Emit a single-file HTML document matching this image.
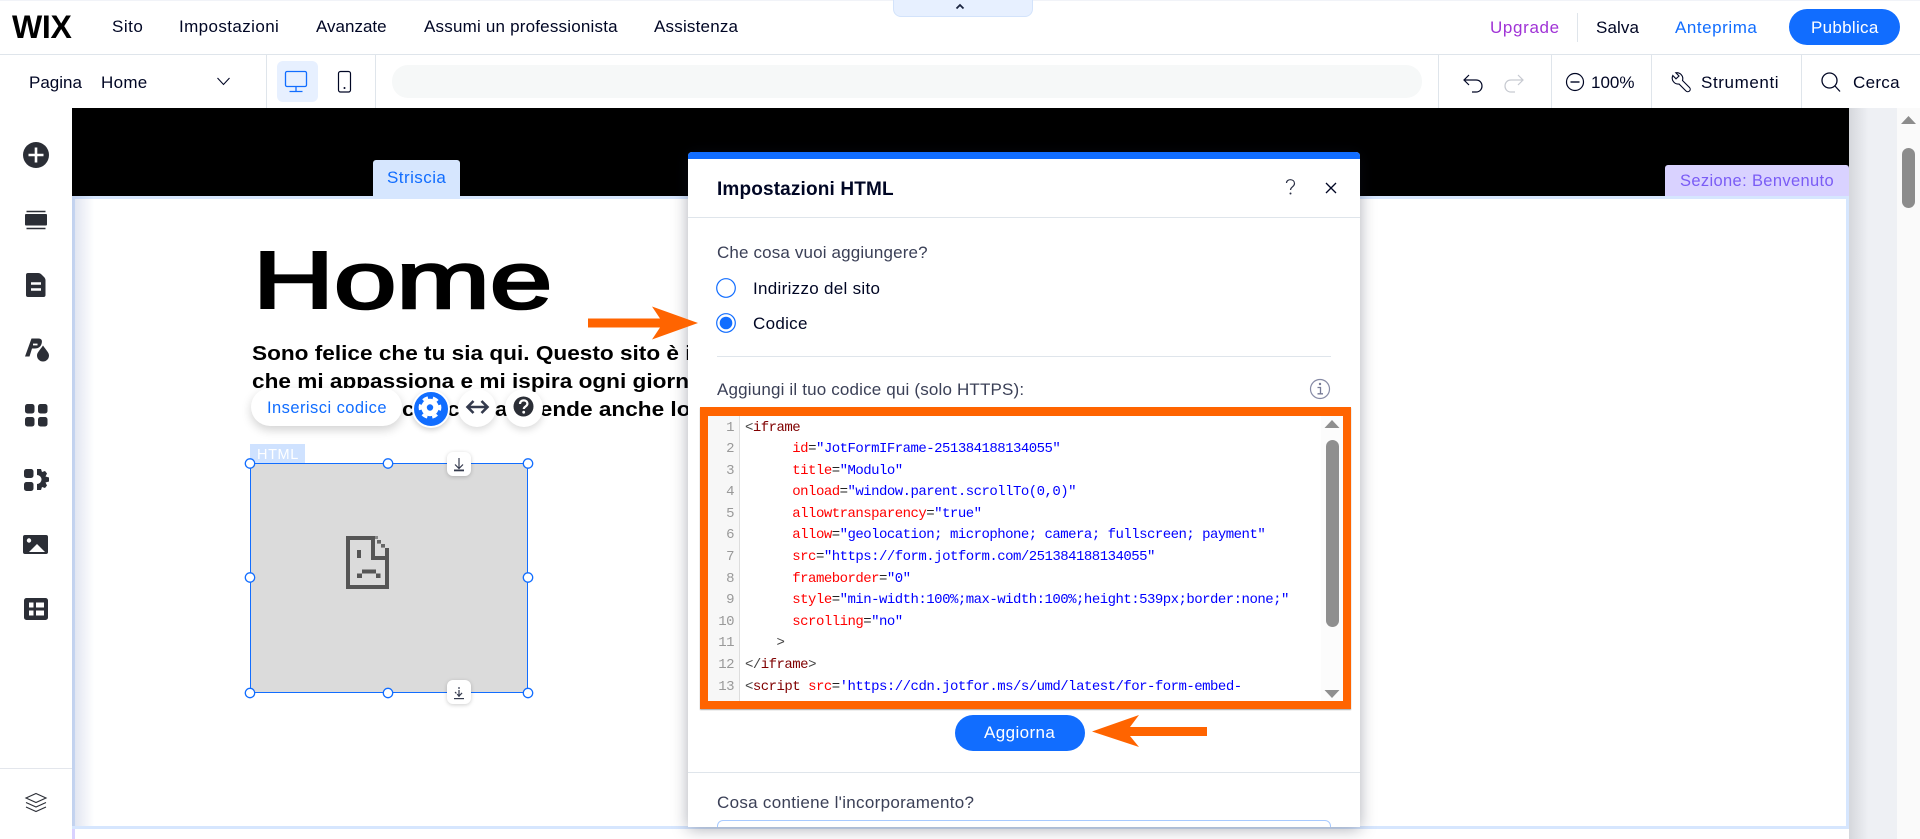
<!DOCTYPE html>
<html lang="it"><head><meta charset="utf-8"><title>Impostazioni HTML</title>
<style>
html,body{margin:0;padding:0;background:#fff}
body{width:1920px;height:839px;overflow:hidden;position:relative;font-family:"Liberation Sans",sans-serif;color:#000624}
.a{position:absolute}
.t{position:absolute;white-space:nowrap;line-height:24px;font-size:17px;letter-spacing:.3px}
.sep{position:absolute;width:1px;background:#dfe5eb}
pre{margin:0;font-family:"Liberation Mono",monospace;font-size:14px;letter-spacing:-.52px;line-height:21.6px}
.tg{color:#800000}.at{color:#f00}.v{color:#00f}.br{color:#444}.eq{color:#222}
.p{position:absolute;white-space:nowrap;font-weight:bold;font-size:20px;line-height:28px;transform:scaleX(1.13);transform-origin:0 0;color:#000}
</style></head><body>

<!-- canvas -->
<div class="a" style="left:72px;top:108px;width:1777px;height:88px;background:#000"></div>
<div class="a" style="left:72px;top:196px;width:1771px;height:627px;border:3px solid #d6e6fe;background:#fff"></div>
<div class="a" style="left:72px;top:826px;width:3px;height:13px;background:#d9d2ff"></div>
<div class="a" style="left:72px;top:826px;width:1777px;height:3px;background:#d6e6fe"></div>
<div class="a" style="left:72px;top:196px;width:22px;height:630px;background:linear-gradient(90deg,rgba(150,165,205,.32),rgba(255,255,255,0) 100%)"></div>
<div class="a" style="left:1849px;top:108px;width:48px;height:731px;background:linear-gradient(90deg,#d5d7dc,#eef0f4 40%)"></div>
<div class="a" style="left:1897px;top:108px;width:23px;height:731px;background:#fafafa"></div>
<div class="a" style="left:1902px;top:148px;width:13px;height:60px;border-radius:7px;background:#8c8c8c"></div>
<svg class="a" style="left:1897px;top:108px" width="23" height="20"><path d="M11.5 8l7.5 8H4z" fill="#8c8c8c"/></svg>

<!-- tags -->
<div class="a" style="left:373px;top:160px;width:87px;height:36px;background:#d6e6fe;border-radius:3px 3px 0 0"></div>
<div class="t" style="left:387px;top:166px;color:#116dff;letter-spacing:.45px">Striscia</div>
<div class="a" style="left:1665px;top:165px;width:184px;height:31px;background:#d9d2ff;border-radius:3px 3px 0 0"></div>
<div class="t" style="left:1680px;top:169px;color:#7a5cf5;font-size:16.5px;letter-spacing:.35px">Sezione: Benvenuto</div>

<!-- page content -->
<div class="a" style="left:253px;top:229px;font-size:81px;line-height:104px;font-weight:normal;-webkit-text-stroke:2.6px #000;transform:scaleX(1.385);transform-origin:0 0;color:#000;white-space:nowrap">Home</div>
<div class="p" style="left:252px;top:340px">Sono felice che tu sia qui. Questo sito è il luogo</div>
<div class="p" style="left:252px;top:368px">che mi appassiona e mi ispira ogni giorno e che</div>
<div class="p" style="left:402px;top:396px">c</div>
<div class="p" style="left:447px;top:396px">c</div>
<div class="p" style="left:495px;top:396px">a</div>
<div class="p" style="left:531px;top:396px">rende anche lo</div>

<!-- floating toolbar -->
<div class="a" style="left:251px;top:388px;width:151px;height:38px;border-radius:19px;background:#fff;box-shadow:0 4px 10px rgba(0,0,0,.18)"></div>
<div class="t" style="left:267px;top:396px;color:#116dff;font-size:16.5px;letter-spacing:.45px">Inserisci codice</div>
<div class="a" style="left:458px;top:389px;width:38px;height:38px;border-radius:50%;background:#fff;box-shadow:0 3px 8px rgba(0,0,0,.15)"></div>
<div class="a" style="left:505px;top:389px;width:38px;height:38px;border-radius:50%;background:#fff;box-shadow:0 3px 8px rgba(0,0,0,.15)"></div>
<div class="a" style="left:412px;top:390px;width:34px;height:34px;border-radius:50%;background:#116dff;border:2px solid #fff;box-shadow:0 2px 6px rgba(0,0,0,.2)"></div>

<!-- HTML tag + selected box -->
<div class="a" style="left:250px;top:444px;width:55px;height:20px;background:#cfe2ff"></div>
<div class="t" style="left:257px;top:443px;color:#fff;font-size:14.5px;letter-spacing:.6px">HTML</div>
<div class="a" style="left:250px;top:463px;width:276px;height:228px;border:1.5px solid #116dff;background:#dbdbdb"></div>
<div class="a" style="left:447px;top:452px;width:24px;height:24px;border-radius:6px;background:#fff;box-shadow:0 1px 4px rgba(0,0,0,.2)"></div>
<div class="a" style="left:447px;top:680px;width:24px;height:24px;border-radius:6px;background:#fff;box-shadow:0 1px 4px rgba(0,0,0,.2)"></div>

<!-- global icon layer (below modal) -->
<svg class="a" style="left:0;top:0" width="1920" height="839" fill="none">
  <!-- handles -->
  <g fill="#fff" stroke="#116dff" stroke-width="1.3">
    <circle cx="250" cy="463.5" r="4.7"/><circle cx="388" cy="463.5" r="4.7"/><circle cx="528" cy="463.5" r="4.7"/>
    <circle cx="250" cy="577.5" r="4.7"/><circle cx="528" cy="577.5" r="4.7"/>
    <circle cx="250" cy="693" r="4.7"/><circle cx="388" cy="693" r="4.7"/><circle cx="528" cy="693" r="4.7"/>
  </g>
  <!-- anchors -->
  <path d="M459 458v10M455 464.5l4 4 4-4" stroke="#343a4d" stroke-width="1.2"/><rect x="454" y="469.5" width="10" height="1.8" fill="#343a4d"/>
  <path d="M459 687v10M455 692l4 4 4-4" stroke="#343a4d" stroke-width="1.2" stroke-dasharray="2 1 7"/><rect x="454" y="698" width="10" height="1.2" fill="#343a4d"/>
  <!-- sad page -->
  <g fill="#555">
    <rect x="346" y="536" width="4" height="53"/><rect x="346" y="536" width="29" height="4"/>
    <rect x="346" y="585" width="43" height="4"/><rect x="385" y="556" width="4" height="33"/>
    <rect x="371" y="536" width="4" height="24"/><rect x="371" y="556" width="18" height="4"/>
    <rect x="375" y="536" width="3" height="3" fill="#888"/><rect x="377" y="540" width="4" height="3.600" fill="#666"/><rect x="381" y="544" width="4" height="3.600" fill="#666"/><rect x="385" y="548" width="4" height="8"/>
    <rect x="357" y="550" width="4" height="8"/>
    <rect x="362" y="569.500" width="14" height="4"/><rect x="357" y="573.500" width="5" height="4.500"/><rect x="376" y="573.500" width="4.500" height="4.500"/>
  </g>
  <!-- gear -->
  <g transform="translate(430,407.5)">
    <circle r="10" stroke="#fff" stroke-width="2.800" stroke-dasharray="5.500 4.970" transform="rotate(-15)"/>
    <circle r="8.700" fill="#fff"/><circle r="3.200" fill="#116dff"/>
  </g>
  <!-- horizontal resize -->
  <path d="M468 407h19M473.5 401l-6 6 6 6M481.5 401l6 6-6 6" stroke="#343a4d" stroke-width="2.6"/>
  <!-- help -->
  <circle cx="523.5" cy="406.5" r="10" fill="#2b2e36"/>
  <path d="M520 404c0-5 7.4-4.6 7.4-.3 0 2.8-3.6 2.7-3.6 5.3" stroke="#fff" stroke-width="2.2"/><circle cx="523.7" cy="412.2" r="1.4" fill="#fff"/>
</svg>

<!-- top bars -->
<div class="a" style="left:0;top:0;width:1920px;height:108px;background:#fff"></div>
<div class="a" style="left:0;top:0;width:1920px;height:1px;background:#f1f3f8"></div>
<div class="a" style="left:0;top:54px;width:1920px;height:1px;background:#dfe5eb"></div>
<div class="a" style="left:893px;top:-1px;width:138px;height:16px;background:#e7f0ff;border:1px solid #d3e3fb;border-radius:0 0 8px 8px"></div>
<svg class="a" style="left:950px;top:1px" width="20" height="10" fill="none"><path d="M6.500 7.500L10 4l3.500 3.500" stroke="#1b2540" stroke-width="1.800"/></svg>

<div class="a" style="left:12px;top:9px;font-size:32px;line-height:37px;font-weight:bold;color:#000;letter-spacing:-.3px">WIX</div>
<div class="t" style="left:112px;top:15px;letter-spacing:.5px">Sito</div>
<div class="t" style="left:179px;top:15px;letter-spacing:.4px">Impostazioni</div>
<div class="t" style="left:316px;top:15px;letter-spacing:0">Avanzate</div>
<div class="t" style="left:424px;top:15px;letter-spacing:.2px">Assumi un professionista</div>
<div class="t" style="left:654px;top:15px;letter-spacing:.2px">Assistenza</div>
<div class="t" style="left:1490px;top:16px;color:#a033d6;letter-spacing:.65px">Upgrade</div>
<div class="sep" style="left:1577px;top:13px;height:29px"></div>
<div class="t" style="left:1596px;top:16px;letter-spacing:.1px">Salva</div>
<div class="t" style="left:1675px;top:16px;color:#116dff;letter-spacing:.55px">Anteprima</div>
<div class="a" style="left:1789px;top:9px;width:111px;height:36px;border-radius:18px;background:#116dff"></div>
<div class="t" style="left:1811px;top:16px;color:#fff">Pubblica</div>

<div class="t" style="left:29px;top:71px;letter-spacing:0">Pagina</div>
<div class="t" style="left:101px;top:71px">Home</div>
<div class="sep" style="left:266px;top:55px;height:53px"></div>
<div class="a" style="left:277px;top:61px;width:41px;height:41px;border-radius:6px;background:#e7f0ff"></div>
<div class="sep" style="left:375px;top:55px;height:53px"></div>
<div class="a" style="left:392px;top:65px;width:1030px;height:33px;border-radius:16px;background:#f6f8f8"></div>
<div class="sep" style="left:1438px;top:55px;height:53px"></div>
<div class="sep" style="left:1551px;top:55px;height:53px"></div>
<div class="sep" style="left:1651px;top:55px;height:53px"></div>
<div class="sep" style="left:1801px;top:55px;height:53px"></div>
<div class="t" style="left:1591px;top:71px;font-size:17px;letter-spacing:0">100%</div>
<div class="t" style="left:1701px;top:71px;letter-spacing:.6px">Strumenti</div>
<div class="t" style="left:1853px;top:71px">Cerca</div>

<svg class="a" style="left:0;top:0" width="1920" height="110" fill="none">
  <path d="M217.500 78l6 6.500 6-6.500" stroke="#000624" stroke-width="1.100"/>
  <rect x="285.500" y="71.500" width="21" height="15" rx="1.500" stroke="#116dff" stroke-width="1.300"/>
  <path d="M296 87v4M289.500 91.500h13" stroke="#116dff" stroke-width="1.300"/>
  <rect x="338.500" y="71.500" width="12" height="20.500" rx="2" stroke="#000624" stroke-width="1.200"/>
  <circle cx="344.500" cy="88" r="1" fill="#000624"/>
  <path d="M1469 75l-5 5 5 5M1465 80h11c8 0 8 12 0 12h-4" stroke="#000624" stroke-width="1.200"/>
  <path d="M1518 75l5 5-5 5M1522 80h-11c-8 0-8 12 0 12h4" stroke="#c6c9d0" stroke-width="1.200"/>
  <circle cx="1575" cy="82" r="8.500" stroke="#000624" stroke-width="1.200"/>
  <path d="M1570.500 82h9" stroke="#000624" stroke-width="1.400"/>
  <path d="M1672.800 75.500L1676 78.800 1679 76 1675.800 72.800A6 6 0 0 1 1682.500 80.500L1689.500 87.500A2.300 2.300 0 0 1 1686 91L1679 84A6 6 0 0 1 1672.800 75.500Z" stroke="#000624" stroke-width="1.100"/>
  <circle cx="1829.500" cy="80.500" r="7.500" stroke="#000624" stroke-width="1.300"/>
  <path d="M1835 86l5 5.500" stroke="#000624" stroke-width="1.300"/>
</svg>

<!-- left sidebar -->
<div class="a" style="left:0;top:108px;width:72px;height:731px;background:#fff"></div>
<div class="a" style="left:0;top:768px;width:72px;height:1px;background:#e3e6ec"></div>
<svg class="a" style="left:0;top:108px" width="72" height="731" fill="none">
  <g transform="translate(0,-108)">
    <circle cx="36" cy="155" r="13" fill="#2b2e36"/>
    <path d="M36 147.500v15M28.500 155h15" stroke="#fff" stroke-width="2.600"/>
    <path d="M26.500 211.500h19M26.500 228.500h19" stroke="#2b2e36" stroke-width="1.600"/>
    <rect x="25" y="214" width="22" height="11.500" rx="1" fill="#2b2e36"/>
    <path d="M28 273h10c1.500 0 2.500 .5 3.500 1.500l2.500 2.500c1 1 1.500 2 1.500 3.500V295a2 2 0 0 1-2 2H28a2 2 0 0 1-2-2V275a2 2 0 0 1 2-2z" fill="#2b2e36"/>
    <path d="M31 283.500h10M31 289.500h10" stroke="#fff" stroke-width="2.400"/>
    <path d="M25 356.500l6.500-18h7c3.500 0 4 2.500 3 5.500-1 3-3.500 4.500-6.500 4.500H32L29.500 356.500z" fill="#2b2e36"/>
    <path d="M33 344.500h4.500" stroke="#fff" stroke-width="1.800"/>
    <path d="M43 345.500c3 4.500 6 7 6 10a6 6 0 0 1-12 0c0-3 3-5.500 6-10z" fill="#2b2e36"/>
    <g fill="#2b2e36">
      <rect x="25" y="404" width="9.500" height="9.500" rx="2.500"/><rect x="38" y="404" width="9.500" height="9.500" rx="2.500"/>
      <rect x="25" y="417" width="9.500" height="9.500" rx="2.500"/><rect x="38" y="417" width="9.500" height="9.500" rx="2.500"/>
      <rect x="24" y="469" width="9.500" height="9" rx="2.500"/><rect x="24" y="482" width="9.500" height="9" rx="2.500"/>
      <path d="M37 469h4l1 3 3-1 2 2.500-1.500 3 3.500 1v4l-3.500 1 1.500 3-2 2.500-3-1-1 3h-4v-6a4.500 4.500 0 0 0 0-9z"/>
      <path d="M25 535h21a2 2 0 0 1 2 2v15a2 2 0 0 1-2 2H25a2 2 0 0 1-2-2v-15a2 2 0 0 1 2-2z"/>
      <rect x="24" y="598" width="24" height="22" rx="2.500"/>
    </g>
    <circle cx="29" cy="540.500" r="2.200" fill="#fff"/>
    <path d="M29 552l8-8 8 8z" fill="#fff"/>
    <g fill="#fff">
      <rect x="29" y="602.500" width="4.500" height="5"/><rect x="36" y="602.500" width="8" height="5"/>
      <rect x="29" y="610.500" width="4.500" height="5"/><rect x="36" y="610.500" width="8" height="5"/>
    </g>
    <g stroke="#2b2e36" stroke-width="1.100">
      <path d="M36 793.500l10 4.500-10 4.500-10-4.500z"/>
      <path d="M26 802.500l10 4.500 10-4.500M26 807l10 4.500 10-4.500"/>
    </g>
  </g>
</svg>

<!-- modal -->
<div class="a" style="left:688px;top:152px;width:672px;height:675px;background:#fff;border-radius:4px 4px 0 0;box-shadow:0 2px 16px rgba(20,25,50,.35);overflow:hidden">
  <div class="a" style="left:0;top:0;width:672px;height:7px;background:#116dff"></div>
  <div class="t" style="left:29px;top:26px;font-size:19px;font-weight:bold;letter-spacing:.15px">Impostazioni HTML</div>
  <div class="a" style="left:0;top:65px;width:672px;height:1px;background:#dfe5eb"></div>
  <div class="t" style="left:29px;top:89px;color:#3b4057;letter-spacing:.15px">Che cosa vuoi aggiungere?</div>
  <div class="t" style="left:65px;top:125px">Indirizzo del sito</div>
  <div class="t" style="left:65px;top:160px">Codice</div>
  <div class="a" style="left:29px;top:204px;width:614px;height:1px;background:#dfe5eb"></div>
  <div class="t" style="left:29px;top:226px;color:#3b4057;letter-spacing:.17px">Aggiungi il tuo codice qui (solo HTTPS):</div>
  <div class="a" style="left:0;top:620px;width:672px;height:1px;background:#dfe5eb"></div>
  <div class="t" style="left:29px;top:639px;color:#3b4057">Cosa contiene l'incorporamento?</div>
  <div class="a" style="left:29px;top:668px;width:612px;height:20px;border:1px solid #a8caff;border-radius:6px"></div>
  <svg class="a" style="left:0;top:0" width="672" height="300" fill="none">
    <path d="M598.500 31c0-4.500 8-4.500 8 .5 0 3.300-4 3.300-4 6.500" stroke="#2b3046" stroke-width="1.200"/>
    <circle cx="602.500" cy="41.500" r="1" fill="#2b3046"/>
    <path d="M638 31l10 10M648 31l-10 10" stroke="#000624" stroke-width="1.300"/>
    <circle cx="38" cy="136" r="9.300" stroke="#116dff" stroke-width="1.200"/>
    <circle cx="38" cy="171" r="9.300" stroke="#116dff" stroke-width="1.200"/>
    <circle cx="38" cy="171" r="6.300" fill="#116dff"/>
    <circle cx="632" cy="237" r="9.500" stroke="#868aa5" stroke-width="1.200"/>
    <path d="M629.500 235.500h3v6M629.500 241.800h5.500" stroke="#767a96" stroke-width="1.300"/>
    <circle cx="632" cy="232" r="1.200" fill="#767a96"/>
  </svg>
</div>

<!-- orange code box -->
<div class="a" style="left:700px;top:407px;width:651px;height:302px;background:#ff6400;box-shadow:0 1px 1px rgba(0,0,0,.35)"></div>
<div class="a" style="left:708px;top:416px;width:635px;height:285px;background:#fff;overflow:hidden">
  <div class="a" style="left:0;top:0;width:31px;height:285px;background:#f7f7f7;border-right:1px solid #ddd"></div>
  <pre class="a" style="left:0;top:1.500px;width:26px;text-align:right;color:#999">1
2
3
4
5
6
7
8
9
10
11
12
13</pre>
  <pre class="a" style="left:37px;top:1.500px"><span class="br">&lt;</span><span class="tg">iframe</span>
      <span class="at">id</span><span class="eq">=</span><span class="v">"JotFormIFrame-251384188134055"</span>
      <span class="at">title</span><span class="eq">=</span><span class="v">"Modulo"</span>
      <span class="at">onload</span><span class="eq">=</span><span class="v">"window.parent.scrollTo(0,0)"</span>
      <span class="at">allowtransparency</span><span class="eq">=</span><span class="v">"true"</span>
      <span class="at">allow</span><span class="eq">=</span><span class="v">"geolocation; microphone; camera; fullscreen; payment"</span>
      <span class="at">src</span><span class="eq">=</span><span class="v">"https://form.jotform.com/251384188134055"</span>
      <span class="at">frameborder</span><span class="eq">=</span><span class="v">"0"</span>
      <span class="at">style</span><span class="eq">=</span><span class="v">"min-width:100%;max-width:100%;height:539px;border:none;"</span>
      <span class="at">scrolling</span><span class="eq">=</span><span class="v">"no"</span>
    <span class="br">&gt;</span>
<span class="br">&lt;/</span><span class="tg">iframe</span><span class="br">&gt;</span>
<span class="br">&lt;</span><span class="tg">script</span> <span class="at">src</span><span class="eq">=</span><span class="v">'https://cdn.jotfor.ms/s/umd/latest/for-form-embed-</span></pre>
  <div class="a" style="left:613px;top:0;width:22px;height:285px;background:#fcfcfc"></div>
  <div class="a" style="left:618px;top:24px;width:13px;height:187px;border-radius:7px;background:#8f8f8f"></div>
  <svg class="a" style="left:613px;top:0" width="22" height="285"><path d="M11 4l7.500 8h-15zM11 282l7.500-8h-15z" fill="#8f8f8f"/></svg>
</div>

<!-- update button -->
<div class="a" style="left:955px;top:715px;width:130px;height:36px;border-radius:18px;background:#116dff"></div>
<div class="t" style="left:984px;top:721px;color:#fff;letter-spacing:.4px">Aggiorna</div>
<!-- annotation arrows (above modal) -->
<svg class="a" style="left:0;top:0" width="1920" height="839">
  <path d="M1207 727v9h-77l9 11-47-15.500 47-16.500-9 12z" fill="#ff6400"/>
  <path d="M588 318.500h72l-8-12 46 16.500-46 16.500 8-12h-72z" fill="#ff6400"/>
</svg>
</body></html>
